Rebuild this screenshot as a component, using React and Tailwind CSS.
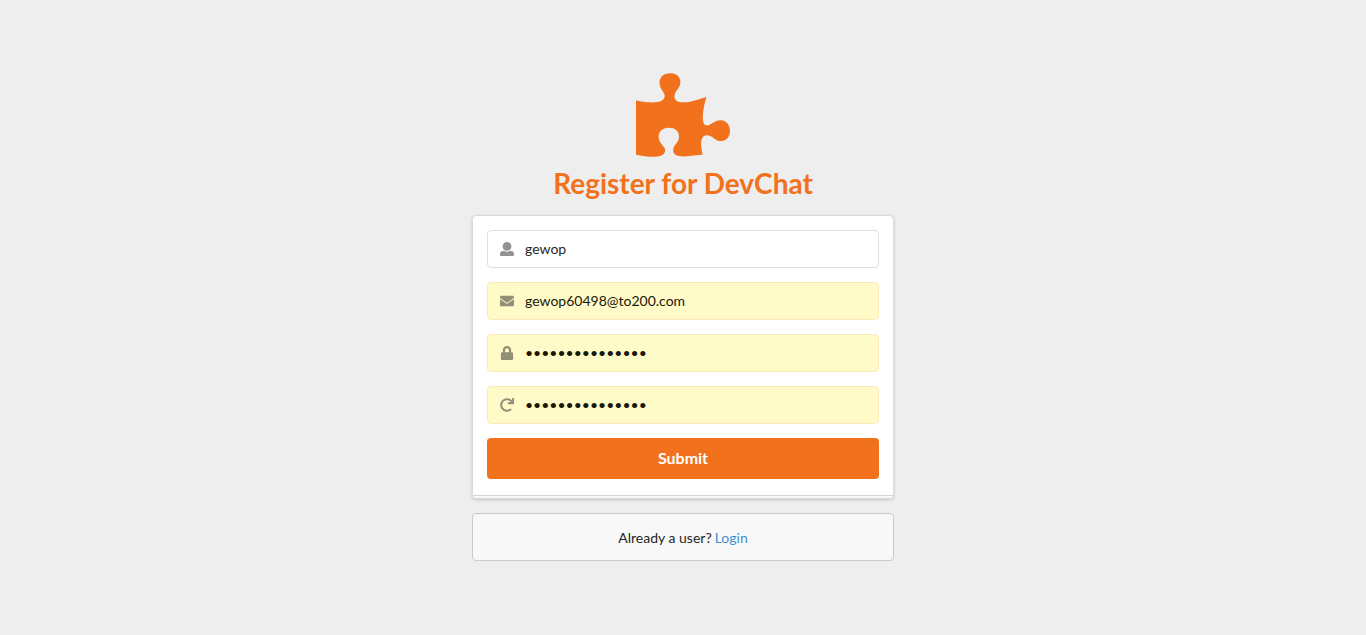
import { FaPuzzlePiece, FaEnvelope, FaLock, FaRedo } from "react-icons/fa";

function FaUserRound(props) {
  return (
    <svg viewBox="0 0 512 512" fill="currentColor" {...props}>
      <path d="M256 0c88.366 0 160 71.634 160 160s-71.634 160-160 160S96 248.366 96 160 167.634 0 256 0zm183.283 333.821l-71.313-17.828c-74.923 53.89-165.738 41.864-223.94 0l-71.313 17.828C29.981 344.505 0 382.903 0 426.955V464c0 26.51 21.49 48 48 48h416c26.51 0 48-21.49 48-48v-37.045c0-44.052-29.981-82.45-72.717-93.134z" />
    </svg>
  );
}

const fields = [
  { name: "username", label: "Username", type: "text", value: "gewop", Icon: FaUserRound },
  { name: "email", label: "Email Address", type: "email", value: "gewop60498@to200.com", Icon: FaEnvelope, filled: true },
  { name: "password", label: "Password", type: "password", value: "abcdefghijklmno", Icon: FaLock, filled: true },
  { name: "passwordConfirmation", label: "Password Confirmation", type: "password", value: "abcdefghijklmno", Icon: FaRedo, filled: true },
];

function Field({ name, label, type, value, Icon, filled }) {
  const look = filled
    ? "border-[#fde9b8] bg-[#fffbc8] text-[#1b1708]"
    : "border-[#dededf] bg-white text-[#262626]";
  return (
    <div className="relative">
      <label htmlFor={name} className="absolute inset-y-0 left-0 flex w-10 items-center justify-center text-[#262626]">
        <Icon className="size-3.5 opacity-50" role="img" aria-label={label} />
      </label>
      <input
        id={name}
        name={name}
        type={type}
        defaultValue={value}
        placeholder={label}
        className={`block w-full rounded border pt-[9px] pr-3.5 pb-2.5 pl-[37px] text-sm leading-[17px] outline-none ${look}`}
      />
    </div>
  );
}

export default function App() {
  return (
    <main className="flex min-h-screen flex-col items-center justify-center bg-[#eeeeee] px-4 pb-0.5 font-['Lato',sans-serif] text-sm text-[#262626]">
      <div className="w-full max-w-[422px]">
        <h1 className="mb-3.5 flex flex-col items-center text-[28px] leading-9 font-bold text-[#f2711c]">
          <FaPuzzlePiece className="mb-2 h-[84px] w-[94px]" aria-hidden="true" />
          Register for DevChat
        </h1>

        <form
          onSubmit={(e) => e.preventDefault()}
          className="overflow-hidden rounded border border-[#dadada] bg-white shadow-[0_1px_3px_rgba(34,36,38,0.2)]"
        >
          <div className="flex flex-col gap-3.5 px-3.5 pt-3.5 pb-4">
            {fields.map((f) => (
              <Field key={f.name} {...f} />
            ))}
            <button type="submit" className="h-[41px] rounded bg-[#f2711c] pb-px text-base font-bold text-white">
              Submit
            </button>
          </div>
          <div className="h-[3px] border-t border-[#d4d4d5] bg-[#f8f8f8]" />
        </form>

        <p className="mt-3.5 flex h-12 items-center justify-center gap-[3px] rounded border border-[#c9caca] bg-[#f8f8f8] pt-0.5">
          Already a user?
          <a href="#login" className="text-[#428fd0]">Login</a>
        </p>
      </div>
    </main>
  );
}
